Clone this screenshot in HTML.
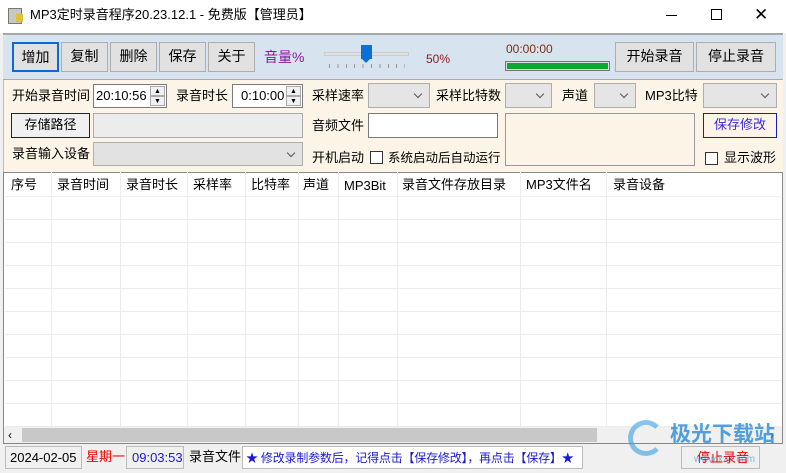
<!DOCTYPE html><html><head><meta charset="utf-8"><style>
*{box-sizing:border-box;margin:0;padding:0}
body{width:786px;height:473px;overflow:hidden;background:#f0f0f0;font-family:"Liberation Sans","Noto Sans CJK SC",sans-serif;font-size:13px;line-height:16px;color:#000;position:relative}
.a{position:absolute;white-space:nowrap}
.btn{position:absolute;background:#e1e1e1;border:1px solid #adadad;text-align:center;font-size:14px}
.cb{position:absolute;background:#e5e5e5;border:1px solid #adadad}
.cb:after{content:"";position:absolute;right:8px;top:7px;width:5px;height:5px;border-right:1px solid #555;border-bottom:1px solid #555;transform:rotate(45deg)}
.in{position:absolute;background:#fff;border:1px solid #7a7a7a}
.chk{position:absolute;width:13px;height:13px;border:1px solid #333;background:#fff}
.col{position:absolute;top:172px;width:1px;height:255px;background:#ececec}
.row{position:absolute;left:5px;width:776px;height:1px;background:#ececec}
.sp{position:absolute;right:1px;width:15px;height:10px;font-size:7px;line-height:10px;text-align:center;border:1px solid #aaa;background:#f0f0f0}
</style></head><body>
<div class="a" style="left:0;top:0;width:786px;height:33px;background:#fff"></div>
<div class="a" style="left:8px;top:8px;width:14px;height:16px;background:#c8c8c0;border:1px solid #777"></div>
<div class="a" style="left:16px;top:14px;width:7px;height:8px;background:#e0c040"></div>
<div class="a" style="left:30px;top:7px;font-size:13px">MP3定时录音程序20.23.12.1 - 免费版【管理员】</div>
<div class="a" style="left:666px;top:15px;width:11px;height:1px;background:#000"></div>
<div class="a" style="left:711px;top:9px;width:11px;height:11px;border:1px solid #000"></div>
<div class="a" style="left:754px;top:5px;font-size:17px;font-weight:300;line-height:20px">✕</div>
<div class="a" style="left:3px;top:33px;width:780px;height:46px;background:#d8e3f0;border-top:2px solid #a8a8a8"></div>
<div class="btn" style="left:12px;top:42px;width:47px;height:30px;line-height:26px;border:2px solid #0a6ad0">增加</div>
<div class="btn" style="left:61px;top:42px;width:47px;height:30px;line-height:27px">复制</div>
<div class="btn" style="left:110px;top:42px;width:47px;height:30px;line-height:27px">删除</div>
<div class="btn" style="left:159px;top:42px;width:47px;height:30px;line-height:27px">保存</div>
<div class="btn" style="left:208px;top:42px;width:47px;height:30px;line-height:27px">关于</div>
<div class="a" style="left:264px;top:49px;font-size:14px;color:#8b1a9a">音量%</div>
<div class="a" style="left:324px;top:52px;width:85px;height:4px;background:#e0e0e0;border:1px solid #ccc"></div>
<div class="a" style="left:361px;top:45px;width:11px;height:14px;background:#0a6fd6"></div>
<div class="a" style="left:361px;top:58px;width:0;height:0;border-left:5.5px solid transparent;border-right:5.5px solid transparent;border-top:5px solid #0a6fd6"></div>
<div class="a" style="left:329px;top:64px;width:76px;height:4px;background:repeating-linear-gradient(90deg,#999 0 1px,transparent 1px 8.4px)"></div>
<div class="a" style="left:426px;top:51px;font-size:12px;color:#8b1a1a">50%</div>
<div class="a" style="left:506px;top:41px;font-size:12px;color:#7a3010">00:00:00</div>
<div class="a" style="left:505px;top:61px;width:105px;height:10px;border:1px solid #777;background:#0aa832;box-shadow:inset 0 0 0 1px #ddd"></div>
<div class="btn" style="left:615px;top:42px;width:79px;height:30px;line-height:27px">开始录音</div>
<div class="btn" style="left:696px;top:42px;width:80px;height:30px;line-height:27px">停止录音</div>
<div class="a" style="left:3px;top:79px;width:780px;height:93px;background:#fcf4e6;border-top:1px solid #aaa;border-left:1px solid #bbb"></div>
<div class="a" style="left:12px;top:88px">开始录音时间</div>
<div class="in" style="left:93px;top:84px;width:74px;height:24px;padding:3px 0 0 2px">20:10:56<div class="sp" style="top:1px">▲</div><div class="sp" style="top:11px">▼</div></div>
<div class="a" style="left:176px;top:88px">录音时长</div>
<div class="in" style="left:232px;top:84px;width:71px;height:24px;padding:3px 0 0 8px">0:10:00<div class="sp" style="top:1px">▲</div><div class="sp" style="top:11px">▼</div></div>
<div class="a" style="left:312px;top:88px">采样速率</div>
<div class="cb" style="left:368px;top:83px;width:62px;height:25px"></div>
<div class="a" style="left:436px;top:88px">采样比特数</div>
<div class="cb" style="left:505px;top:83px;width:47px;height:25px"></div>
<div class="a" style="left:562px;top:88px">声道</div>
<div class="cb" style="left:594px;top:83px;width:42px;height:25px"></div>
<div class="a" style="left:645px;top:88px">MP3比特</div>
<div class="cb" style="left:703px;top:83px;width:74px;height:25px"></div>
<div class="btn" style="left:11px;top:113px;width:79px;height:25px;line-height:22px;font-size:13px;border:1px solid #222;background:#f0f0f0">存储路径</div>
<div class="a" style="left:93px;top:113px;width:210px;height:25px;background:#ececec;border:1px solid #aaa"></div>
<div class="a" style="left:312px;top:118px">音频文件</div>
<div class="in" style="left:368px;top:113px;width:130px;height:25px"></div>
<div class="a" style="left:505px;top:113px;width:190px;height:53px;border:1px solid #999"></div>
<div class="btn" style="left:703px;top:113px;width:74px;height:25px;line-height:22px;font-size:13px;border:1px solid #1a1ac8;background:#fcf4e6;color:#3a2ad8">保存修改</div>
<div class="a" style="left:12px;top:146px">录音输入设备</div>
<div class="cb" style="left:93px;top:142px;width:210px;height:24px;background:#e2e2e2"></div>
<div class="a" style="left:312px;top:150px">开机启动</div>
<div class="chk" style="left:370px;top:151px"></div>
<div class="a" style="left:388px;top:150px;font-size:12.5px">系统启动后自动运行</div>
<div class="chk" style="left:705px;top:152px"></div>
<div class="a" style="left:724px;top:150px">显示波形</div>
<div class="a" style="left:3px;top:172px;width:780px;height:272px;background:#fff;border:1px solid #888"></div>
<div class="a" style="left:5px;top:196px;width:776px;height:1px;background:#f0f0f0"></div>
<div class="col" style="left:51px"></div><div class="col" style="left:120px"></div><div class="col" style="left:187px"></div><div class="col" style="left:245px"></div><div class="col" style="left:298px"></div><div class="col" style="left:338px"></div><div class="col" style="left:397px"></div><div class="col" style="left:520px"></div><div class="col" style="left:606px"></div>
<div class="row" style="top:219px"></div><div class="row" style="top:242px"></div><div class="row" style="top:265px"></div><div class="row" style="top:288px"></div><div class="row" style="top:311px"></div><div class="row" style="top:334px"></div><div class="row" style="top:357px"></div><div class="row" style="top:380px"></div><div class="row" style="top:403px"></div><div class="row" style="top:426px"></div>
<div class="a" style="left:11px;top:177px">序号</div>
<div class="a" style="left:57px;top:177px">录音时间</div>
<div class="a" style="left:126px;top:177px">录音时长</div>
<div class="a" style="left:193px;top:177px">采样率</div>
<div class="a" style="left:251px;top:177px">比特率</div>
<div class="a" style="left:303px;top:177px">声道</div>
<div class="a" style="left:344px;top:178px">MP3Bit</div>
<div class="a" style="left:402px;top:177px">录音文件存放目录</div>
<div class="a" style="left:526px;top:177px">MP3文件名</div>
<div class="a" style="left:613px;top:177px">录音设备</div>
<div class="a" style="left:4px;top:427px;width:778px;height:16px;background:#f0f0f0"></div>
<div class="a" style="left:22px;top:428px;width:575px;height:14px;background:#c8c8c8"></div>
<div class="a" style="left:8px;top:427px;font-size:12px">‹</div>
<div class="a" style="left:770px;top:427px;font-size:12px">›</div>
<div class="a" style="left:5px;top:446px;width:77px;height:23px;border:1px solid #bbb;padding:3px 0 0 4px">2024-02-05</div>
<div class="a" style="left:86px;top:449px;color:#e00">星期一</div>
<div class="a" style="left:126px;top:446px;width:58px;height:23px;border:1px solid #bbb;padding:3px 0 0 5px;color:#1a1ad0">09:03:53</div>
<div class="a" style="left:189px;top:449px">录音文件</div>
<div class="a" style="left:242px;top:446px;width:341px;height:23px;background:#fff;border:1px solid #bbb;padding:3px 0 0 3px;color:#1a1ad0;font-size:12px;letter-spacing:-0.2px">★ 修改录制参数后，记得点击【保存修改】，再点击【保存】★</div>
<div class="a" style="left:681px;top:446px;width:79px;height:23px;border:1px solid #bbb;padding:3px 0 0 15px;color:#e00">停止录音</div>
<div class="a" style="left:628px;top:420px;width:36px;height:36px;border-radius:50%;border:5px solid #3aa0e0;border-right-color:transparent;opacity:.6"></div>
<div class="a" style="left:670px;top:422px;font-size:21px;line-height:26px;font-weight:bold;color:#2a8ad8;opacity:.8">极光下载站</div>
<div class="a" style="left:694px;top:452px;font-size:10px;color:#2a8ad8;opacity:.6">www.xz7.com</div>
</body></html>
